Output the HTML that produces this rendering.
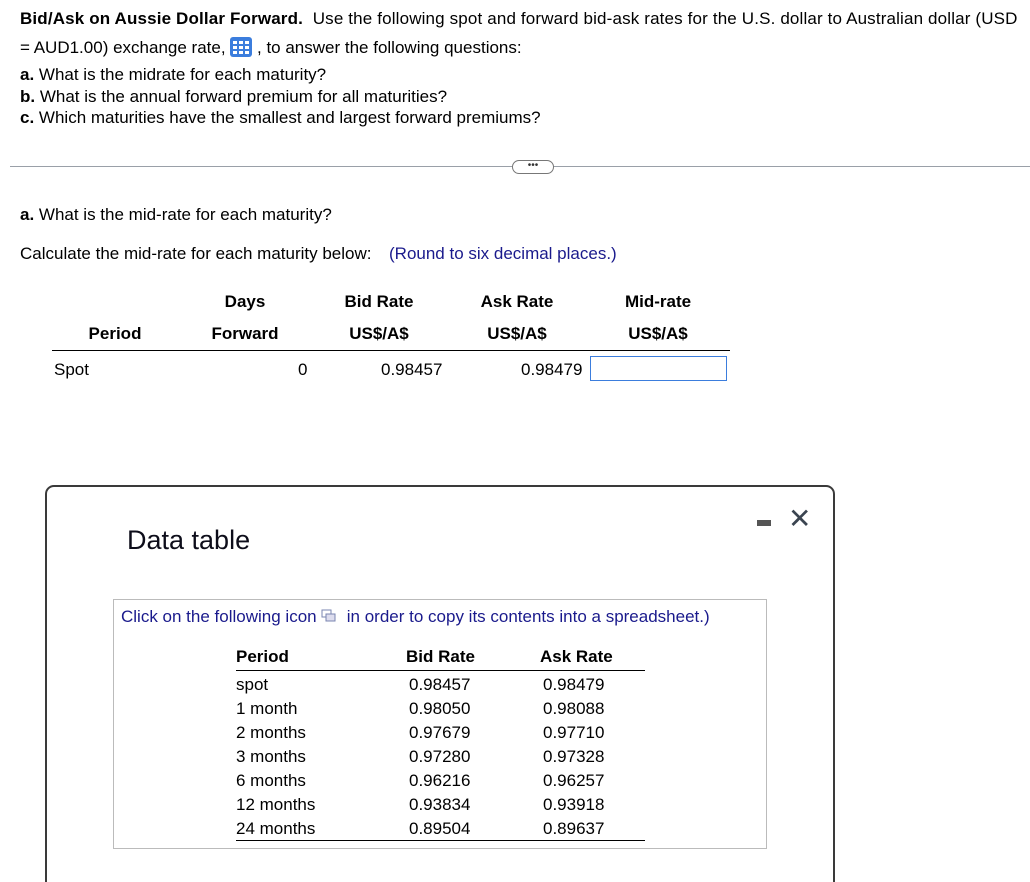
<!DOCTYPE html>
<html style="height:882px;overflow:hidden"><head><style>
body{margin:0;width:1030px;height:882px;background:#fff;font-family:"Liberation Sans",Arial,sans-serif;font-size:17px;color:#000;position:relative;overflow:hidden}
.a{position:absolute;white-space:nowrap}
.b{font-weight:bold}
.blue{color:#1a1a8c}
.c{text-align:center}
</style></head><body>
<div class="a" style="left:20px;top:9px;letter-spacing:0.15px"><span class="b">Bid/Ask on Aussie Dollar Forward.</span>&nbsp; Use the following spot and forward bid-ask rates for the U.S. dollar to Australian dollar (USD</div>
<div class="a" style="left:20px;top:37px">= AUD1.00) exchange rate, <svg width="22" height="20" viewBox="0 0 22 20" style="vertical-align:-4px"><rect x="0" y="0" width="22" height="20" rx="3" fill="#3b7ddd"/><g fill="#fff"><rect x="3" y="4" width="4" height="3"/><rect x="9" y="4" width="4" height="3"/><rect x="15" y="4" width="4" height="3"/><rect x="3" y="9" width="4" height="3"/><rect x="9" y="9" width="4" height="3"/><rect x="15" y="9" width="4" height="3"/><rect x="3" y="14" width="4" height="3"/><rect x="9" y="14" width="4" height="3"/><rect x="15" y="14" width="4" height="3"/></g></svg> , to answer the following questions:</div>
<div class="a" style="left:20px;top:65px"><span class="b">a.</span> What is the midrate for each maturity?</div>
<div class="a" style="left:20px;top:87px"><span class="b">b.</span> What is the annual forward premium for all maturities?</div>
<div class="a" style="left:20px;top:108px"><span class="b">c.</span> Which maturities have the smallest and largest forward premiums?</div>
<div class="a" style="left:10px;top:166px;width:1020px;height:1px;background:#9aa0a8"></div>
<div class="a" style="left:512px;top:160px;width:40px;height:12px;border:1px solid #777;border-radius:7px;background:#fff;font-size:10px;line-height:10px;text-align:center;color:#333">•••</div>
<div class="a" style="left:20px;top:205px"><span class="b">a.</span> What is the mid-rate for each maturity?</div>
<div class="a" style="left:20px;top:244px">Calculate the mid-rate for each maturity below:</div>
<div class="a blue" style="left:389px;top:244px">(Round to six decimal places.)</div>
<div class="a b c" style="left:195px;top:292px;width:100px">Days</div>
<div class="a b c" style="left:329px;top:292px;width:100px">Bid Rate</div>
<div class="a b c" style="left:467px;top:292px;width:100px">Ask Rate</div>
<div class="a b c" style="left:608px;top:292px;width:100px">Mid-rate</div>
<div class="a b c" style="left:65px;top:324px;width:100px">Period</div>
<div class="a b c" style="left:195px;top:324px;width:100px">Forward</div>
<div class="a b c" style="left:329px;top:324px;width:100px">US$/A$</div>
<div class="a b c" style="left:467px;top:324px;width:100px">US$/A$</div>
<div class="a b c" style="left:608px;top:324px;width:100px">US$/A$</div>
<div class="a" style="left:52px;top:350px;width:678px;height:1px;background:#000"></div>
<div class="a" style="left:54px;top:360px">Spot</div>
<div class="a" style="left:298px;top:360px">0</div>
<div class="a" style="left:381px;top:360px">0.98457</div>
<div class="a" style="left:521px;top:360px">0.98479</div>
<div class="a" style="left:590px;top:356px;width:135px;height:23px;border:1px solid #3b7ddd"></div>
<div class="a" style="left:45px;top:485px;width:786px;height:410px;border:2px solid #3a3a3a;border-radius:9px"></div>
<div class="a" style="left:127px;top:525px;font-size:27px;color:#0d0d1a">Data table</div>
<div class="a" style="left:757px;top:520px;width:14px;height:6px;background:#555"></div>
<div class="a" style="left:788px;top:502px;font-size:28px;color:#3a4450">✕</div>
<div class="a" style="left:113px;top:599px;width:652px;height:248px;border:1px solid #bbb"></div>
<div class="a blue" style="left:121px;top:607px">Click on the following icon <svg width="16" height="14" viewBox="0 0 16 14" style="vertical-align:-1px"><rect x="1" y="1" width="9" height="7" fill="#fff" stroke="#7a85b0"/><rect x="5" y="5" width="9" height="7" fill="#dde" stroke="#7a85b0"/></svg> &nbsp;in order to copy its contents into a spreadsheet.)</div>
<div class="a b" style="left:236px;top:647px">Period</div>
<div class="a b" style="left:406px;top:647px">Bid Rate</div>
<div class="a b" style="left:540px;top:647px">Ask Rate</div>
<div class="a" style="left:236px;top:670px;width:409px;height:1px;background:#000"></div>
<div class="a" style="left:236px;top:673px;line-height:24px">spot<br>1 month<br>2 months<br>3 months<br>6 months<br>12 months<br>24 months</div>
<div class="a" style="left:409px;top:673px;line-height:24px">0.98457<br>0.98050<br>0.97679<br>0.97280<br>0.96216<br>0.93834<br>0.89504</div>
<div class="a" style="left:543px;top:673px;line-height:24px">0.98479<br>0.98088<br>0.97710<br>0.97328<br>0.96257<br>0.93918<br>0.89637</div>
<div class="a" style="left:236px;top:840px;width:409px;height:1px;background:#000"></div>
</body></html>
